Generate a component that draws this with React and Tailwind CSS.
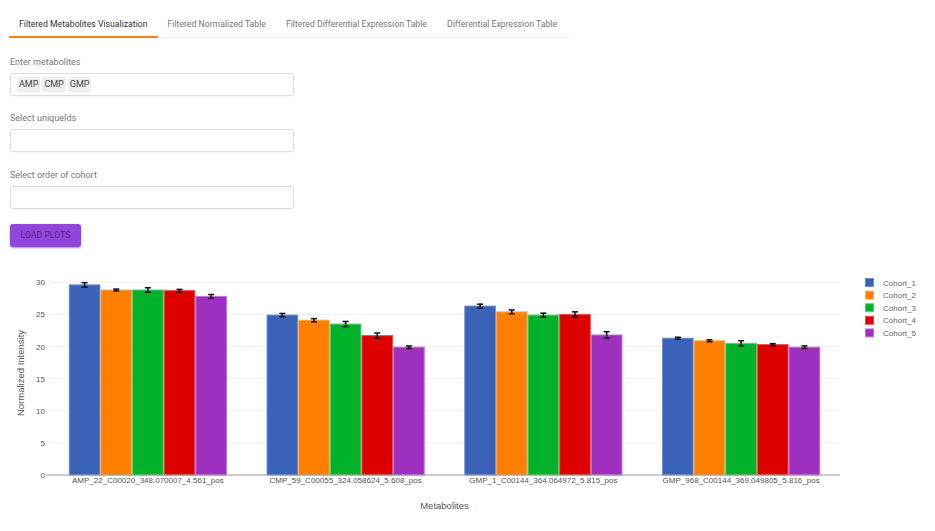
import { useState } from 'react';

const tabs = [
  'Filtered Metabolites Visualization',
  'Filtered Normalized Table',
  'Filtered Differential Expression Table',
  'Differential Expression Table',
];

const cohorts = [
  { name: 'Cohort_1', fill: '#3a63b8', line: '#6a8fd6' },
  { name: 'Cohort_2', fill: '#ff8000', line: '#ffa850' },
  { name: 'Cohort_3', fill: '#00b22b', line: '#4fd56a' },
  { name: 'Cohort_4', fill: '#dc0000', line: '#f04a4a' },
  { name: 'Cohort_5', fill: '#9e30bf', line: '#c070dc' },
];

const groups = [
  {
    label: 'AMP_22_C00020_348.070007_4.561_pos',
    values: [29.6, 28.8, 28.8, 28.7, 27.8],
    errs: [0.35, 0.15, 0.35, 0.2, 0.3],
  },
  {
    label: 'CMP_59_C00055_324.058624_5.608_pos',
    values: [24.9, 24.1, 23.5, 21.7, 19.9],
    errs: [0.25, 0.25, 0.4, 0.4, 0.2],
  },
  {
    label: 'GMP_1_C00144_364.064972_5.815_pos',
    values: [26.3, 25.4, 24.9, 25.0, 21.8],
    errs: [0.3, 0.3, 0.3, 0.4, 0.5],
  },
  {
    label: 'GMP_968_C00144_369.049805_5.816_pos',
    values: [21.3, 20.9, 20.5, 20.3, 19.9],
    errs: [0.15, 0.15, 0.4, 0.15, 0.2],
  },
];

// chart geometry (svg coordinates, svg top sits at page y=260)
const X0 = 49;
const X1 = 840;
const Y0 = 216; // value 0
const YTOP = 12;
const SCALE = 6.423;
const BAND = (X1 - X0) / groups.length;
const BAR = (BAND * 0.8) / cohorts.length;

const yOf = (v) => Y0 - v * SCALE;

function Chart() {
  return (
    <svg width="935" height="271" className="block" style={{ fontFamily: '"Liberation Sans", Arial, sans-serif' }}>
      {/* grid */}
      {[5, 10, 15, 20, 25, 30].map((t) => (
        <line key={t} x1={X0} x2={X1} y1={yOf(t)} y2={yOf(t)} stroke="#eeeeee" strokeWidth="1" />
      ))}
      {[0, 5, 10, 15, 20, 25, 30].map((t) => (
        <text key={t} x={X0 - 4} y={yOf(t) + 3} fontSize="8" fill="#555" textAnchor="end">
          {t}
        </text>
      ))}

      {/* bars */}
      {groups.map((g, gi) => {
        const start = X0 + gi * BAND + BAND * 0.1;
        return (
          <g key={g.label}>
            {g.values.map((v, ci) => {
              const x = start + ci * BAR;
              const y = yOf(v);
              const cx = x + BAR / 2;
              const e = g.errs[ci] * SCALE;
              return (
                <g key={ci}>
                  <rect
                    x={x + 0.5}
                    y={y}
                    width={BAR - 1}
                    height={Y0 - y}
                    fill={cohorts[ci].fill}
                    stroke={cohorts[ci].line}
                    strokeWidth="1"
                  />
                  <line x1={cx} x2={cx} y1={y - e} y2={y + e} stroke="#111" strokeWidth="1.5" />
                  <line x1={cx - 3} x2={cx + 3} y1={y - e} y2={y - e} stroke="#111" strokeWidth="1.5" />
                  <line x1={cx - 3} x2={cx + 3} y1={y + e} y2={y + e} stroke="#111" strokeWidth="1.5" />
                </g>
              );
            })}
            <text x={X0 + gi * BAND + BAND / 2} y={Y0 + 8} fontSize="8" fill="#555" textAnchor="middle">
              {g.label}
            </text>
          </g>
        );
      })}

      {/* zero line */}
      <line x1={X0 - 3} x2={X1} y1={Y0} y2={Y0} stroke="#999" strokeWidth="1" />

      {/* axis titles */}
      <text x={(X0 + X1) / 2} y={250} fontSize="9.5" fill="#555" textAnchor="middle">
        Metabolites
      </text>
      <text
        x={0}
        y={0}
        fontSize="9.5"
        fill="#555"
        textAnchor="middle"
        transform={`translate(24 ${(YTOP + Y0) / 2}) rotate(-90)`}
      >
        Normalized Intensity
      </text>

      {/* legend */}
      {cohorts.map((c, i) => (
        <g key={c.name}>
          <rect x="865.5" y={19.5 + i * 12.6} width="8" height="8" fill={c.fill} stroke={c.line} strokeWidth="1" />
          <text x="883" y={26.5 + i * 12.6} fontSize="8" fill="#666">
            {c.name}
          </text>
        </g>
      ))}
    </svg>
  );
}

function Field({ label, children, className }) {
  return (
    <div className={className}>
      <div className="h-[12px] text-[9px] leading-[12px] text-[#777]">{label}</div>
      <div className="mt-[5px] flex h-[23px] w-[284px] items-center gap-[2px] rounded-[3px] border border-[#dcdcdc] bg-white px-[6px] shadow-[0_1px_1px_rgba(0,0,0,0.04)]">
        {children}
      </div>
    </div>
  );
}

export default function App() {
  const [active, setActive] = useState(0);
  const chips = ['AMP', 'CMP', 'GMP'];

  return (
    <div className="min-h-[531px] w-[935px] bg-white" style={{ fontFamily: 'Roboto, "Liberation Sans", sans-serif' }}>
      <div className="pl-[9px] pr-[10px] pt-[10px]">
        <div className="flex w-[561px] border-b border-[#eeeeee]">
          {tabs.map((t, i) => (
            <button
              key={t}
              onClick={() => setActive(i)}
              className={`-mb-px h-[28px] whitespace-nowrap px-[10px] pt-[3px] text-[8.7px] ${
                active === i ? 'border-b-[2px] border-[#ff8000] text-[#333]' : 'border-b-[2px] border-transparent text-[#777]'
              }`}
            >
              {t}
            </button>
          ))}
        </div>

        <div className="pl-[1px]">
          <Field label="Enter metabolites" className="mt-[18px]">
            {chips.map((c) => (
              <span key={c} className="rounded-[2px] bg-[#eeeeee] px-[2px] py-[2px] text-[9px] leading-[11px] text-[#444]">
                {c}
              </span>
            ))}
          </Field>
          <Field label="Select uniqueIds" className="mt-[16px]" />
          <Field label="Select order of cohort" className="mt-[17px]" />
          <button className="mt-[15px] h-[23px] w-[71px] rounded-[3px] bg-[#9146db] text-[8.5px] tracking-[0.1px] text-[#5a2790] shadow-[0_1px_2px_rgba(60,40,200,0.5)]">
            LOAD PLOTS
          </button>
        </div>
      </div>
      <div className="mt-[12px]">
        <Chart />
      </div>
    </div>
  );
}
